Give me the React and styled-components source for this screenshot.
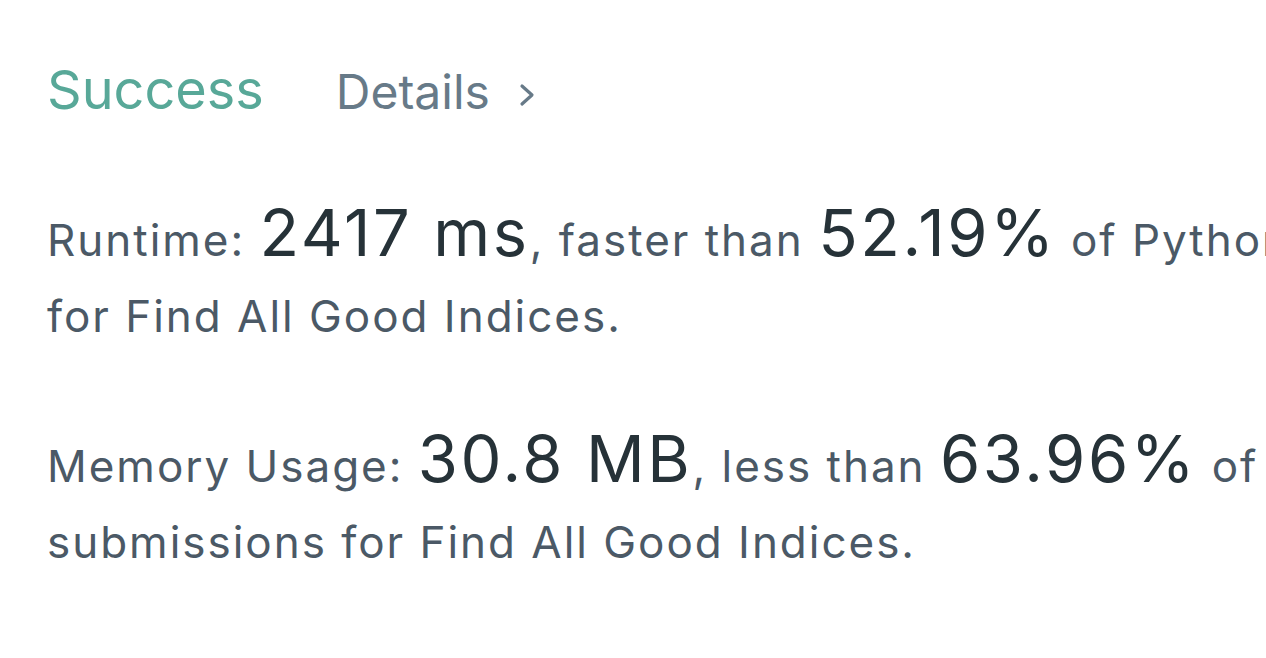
import styled, { createGlobalStyle } from 'styled-components';

const GlobalStyle = createGlobalStyle`
  html, body {
    margin: 0;
    padding: 0;
    background: #ffffff;
    overflow: hidden;
  }
  body {
    font-family: Inter, "Noto Sans", "Liberation Sans", sans-serif;
  }
`;

const Page = styled.div`
  width: 2000px;
  padding: 57px 0 0 47px;
  box-sizing: border-box;
`;

const Header = styled.div`
  display: flex;
  align-items: baseline;
  gap: 72px;
`;

const Status = styled.span`
  font-size: 54px;
  font-weight: 400;
  color: #58a898;
`;

const DetailsLink = styled.a`
  display: inline-flex;
  align-items: center;
  gap: 28px;
  font-size: 48px;
  color: #677a88;
  text-decoration: none;
`;

const Chevron = styled.svg`
  width: 18px;
  height: 26px;
  transform: translateY(3px);
`;

const Result = styled.p`
  margin: ${({ $first }) => ($first ? '73px' : '67px')} 0 0;
  width: 1735px;
  font-size: 44px;
  letter-spacing: 0.045em;
  line-height: 76px;
  color: #4b5966;
`;

const Figure = styled.span`
  font-size: 65px;
  letter-spacing: 0.04em;
  color: #263238;
`;

function Stat({ label, value, compare, percent, first }) {
  return (
    <Result $first={first}>
      {label}: <Figure>{value}</Figure>, {compare} than <Figure>{percent}</Figure> of
      Python3 online submissions for Find All Good Indices.
    </Result>
  );
}

export default function App() {
  return (
    <>
      <GlobalStyle />
      <Page>
        <Header>
          <Status>Success</Status>
          <DetailsLink href="#">
            Details
            <Chevron viewBox="0 0 18 26" fill="none">
              <path d="M4 4l10 9L4 22" stroke="#677a88" strokeWidth="3.2" strokeLinecap="round" strokeLinejoin="round" />
            </Chevron>
          </DetailsLink>
        </Header>
        <Stat first label="Runtime" value="2417 ms" compare="faster" percent="52.19%" />
        <Stat label="Memory Usage" value="30.8 MB" compare="less" percent="63.96%" />
      </Page>
    </>
  );
}
